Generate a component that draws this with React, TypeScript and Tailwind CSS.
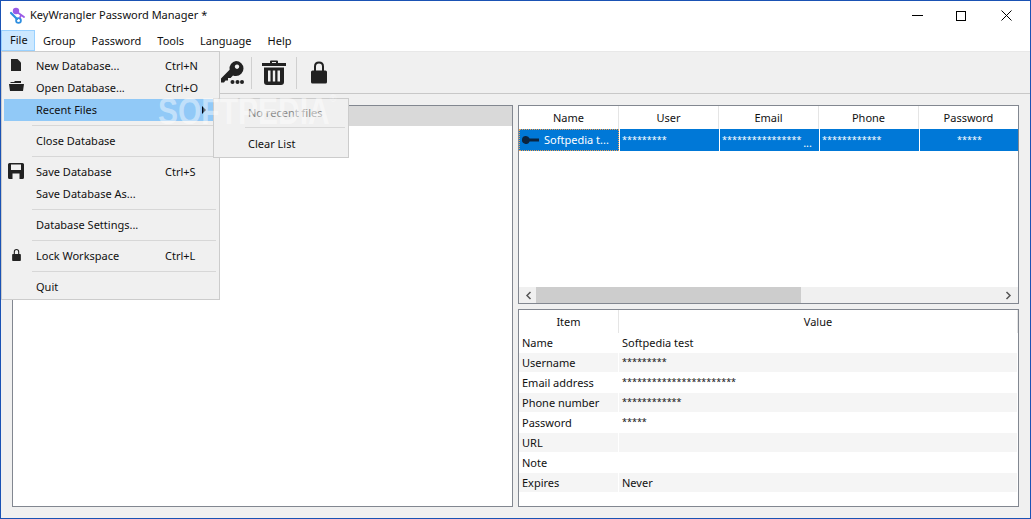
const font = { fontFamily: '"Noto Sans", sans-serif' };

const menuBar = ["Group", "Password", "Tools", "Language", "Help"];

const columns = ["Name", "User", "Email", "Phone", "Password"];

const details = [
  ["Name", "Softpedia test"],
  ["Username", "*********"],
  ["Email address", "***********************"],
  ["Phone number", "************"],
  ["Password", "*****"],
  ["URL", ""],
  ["Note", ""],
  ["Expires", "Never"],
];

function Logo() {
  return (
    <svg width="16" height="17" viewBox="0 0 16 17">
      <g fill="none" strokeLinecap="round">
        <path d="M2 6 L8 12" stroke="#2f8fe0" strokeWidth="2.2" />
        <circle cx="9.5" cy="13.5" r="2.4" stroke="#2f8fe0" strokeWidth="1.8" />
        <circle cx="7" cy="4" r="3.2" fill="#9a5be6" />
        <path d="M8 5 L15 10 M12 8 L11 10.5" stroke="#9a5be6" strokeWidth="1.8" />
      </g>
    </svg>
  );
}

function KeyDots() {
  return (
    <svg width="24" height="25" viewBox="0 0 24 25" fill="#222">
      <path d="M16 1 a7.5 7.5 0 0 1 0 15 a7.5 7.5 0 0 1 -3 -.6 l-2.4 2.6 h-2.6 v2.5 h-2.5 l-1.5 2 H1 v-4 l8.6 -8.8 A7.5 7.5 0 0 1 16 1 z M17 4.5 a2.2 2.2 0 1 0 .01 0 z" fillRule="evenodd" />
      <circle cx="12.5" cy="22" r="2" />
      <circle cx="17.5" cy="22" r="2" />
      <circle cx="22" cy="22" r="2" />
    </svg>
  );
}

function Trash() {
  return (
    <svg width="24" height="25" viewBox="0 0 24 25" fill="#222">
      <path d="M8 3 V1.5 Q8 0.5 9 0.5 H15 Q16 0.5 16 1.5 V3 H24 V6 H0 V3 z M10 3 H14 V2 H10 z" fillRule="evenodd" />
      <path d="M2 7.5 H22 V22 Q22 25 19 25 H5 Q2 25 2 22 z M6 10.5 V21.5 H8.5 V10.5 z M10.8 10.5 V21.5 H13.2 V10.5 z M15.5 10.5 V21.5 H18 V10.5 z" fillRule="evenodd" />
    </svg>
  );
}

function Lock({ w, h }: { w: number; h: number }) {
  return (
    <svg width={w} height={h} viewBox="0 0 16 22" fill="#222">
      <path d="M3 9 V5 Q3 0 8 0 Q13 0 13 5 V9 H14.5 Q16 9 16 10.5 V20.5 Q16 22 14.5 22 H1.5 Q0 22 0 20.5 V10.5 Q0 9 1.5 9 z M5 9 H11 V5 Q11 2 8 2 Q5 2 5 5 z" fillRule="evenodd" />
    </svg>
  );
}

function MenuRow({ label, shortcut, icon }: { label: string; shortcut?: string; icon?: React.ReactNode }) {
  return (
    <div className="flex h-[22px] items-center">
      <div className="mb-[2px] flex w-[32px] justify-center pr-[8px]">{icon}</div>
      <span className="w-[129px] whitespace-nowrap">{label}</span>
      <span>{shortcut}</span>
    </div>
  );
}

function Sep() {
  return <div className="my-[4px] ml-[28px] mr-[3px] h-px bg-[#d7d7d7]" />;
}

function FileMenu() {
  return (
    <div className="absolute left-0 top-[50px] z-10 h-[249px] w-[219px] border border-[#cccccc] bg-[#f0f0f0] pl-[2px] pt-[3px] text-[11px] text-[#111]">
      <MenuRow
        label="New Database..."
        shortcut="Ctrl+N"
        icon={
          <svg width="10" height="12" viewBox="0 0 10 12" fill="#222">
            <path d="M0 0 H6.5 L10 3.5 V12 H0 z" />
          </svg>
        }
      />
      <MenuRow
        label="Open Database..."
        shortcut="Ctrl+O"
        icon={
          <svg width="15" height="10" viewBox="0 0 15 10" fill="#222" className="mb-[2px]">
            <path d="M1 1 H5 L6 0 H12 V2 H2 z M0 3 H15 L14 10 H1 z" />
          </svg>
        }
      />
      <div className="relative mr-[4px] flex h-[22px] items-center bg-[#91c9f7]">
        <span className="pl-[32px]">Recent Files</span>
        <span className="absolute right-[9px] top-[7px] h-0 w-0 border-y-[4px] border-l-[4px] border-y-transparent border-l-black" />
      </div>
      <Sep />
      <MenuRow label="Close Database" />
      <Sep />
      <MenuRow
        label="Save Database"
        shortcut="Ctrl+S"
        icon={
          <svg width="16" height="16" viewBox="0 0 16 16" fill="#222">
            <path
              d="M1.5 0 H14.5 Q16 0 16 1.5 V14.5 Q16 16 14.5 16 H1.5 Q0 16 0 14.5 V1.5 Q0 0 1.5 0 z M3 1.5 V7 H13 V1.5 z M4.5 10.5 V16 H11.5 V10.5 z"
              fillRule="evenodd"
            />
          </svg>
        }
      />
      <MenuRow label="Save Database As..." />
      <Sep />
      <MenuRow label="Database Settings..." />
      <Sep />
      <MenuRow label="Lock Workspace" shortcut="Ctrl+L" icon={<Lock w={9} h={12} />} />
      <Sep />
      <MenuRow label="Quit" />
    </div>
  );
}

function RecentMenu() {
  return (
    <div className="absolute left-[212px] top-[97px] z-20 h-[60px] w-[136px] border border-[#cccccc] bg-[#f0f0f0] text-[11px] text-[#111]">
      <div className="flex h-[28px] items-center pl-[34px] text-[#888]">No recent files</div>
      <div className="ml-[31px] mr-[3px] h-px bg-[#d7d7d7]" />
      <div className="flex h-[29px] items-center pl-[34px] pt-[3px]">Clear List</div>
    </div>
  );
}

function Watermark() {
  return (
    <div
      className="pointer-events-none absolute left-[157px] top-[93px] z-30 flex scale-y-[1.2] text-[30px] font-bold leading-[36px] text-white/45"
      style={{ fontFamily: '"Liberation Sans", sans-serif' }}
    >
      SOFTPEDIA
      <span className="text-[9px] font-normal leading-[14px]">®</span>
    </div>
  );
}

function EntriesTable() {
  return (
    <div className="flex h-[199px] flex-col overflow-hidden border border-[#828790] bg-white">
      <div className="grid h-[23px] grid-cols-[100px_100px_100px_100px_100px]">
        {columns.map((c) => (
          <div key={c} className="flex items-center justify-center border-r border-[#e5e5e5] pt-px text-[11px] text-[#111]">
            {c}
          </div>
        ))}
      </div>
      <div className="grid h-[22px] grid-cols-[100px_100px_100px_100px_100px] text-[9px] text-white">
        <div className="flex items-center gap-[5px] border border-dotted border-[#f0a050] bg-[#0078d7] pl-[2px] text-[11px]">
          <svg width="17" height="8" viewBox="0 0 17 8" fill="#0b2440">
            <path d="M4 0 a4 4 0 0 1 3.6 2.5 H17 V5.5 H7.6 A4 4 0 1 1 4 0 z" />
          </svg>
          <span className="whitespace-nowrap">Softpedia t...</span>
        </div>
        <div className="ml-px bg-[#0078d7] pl-[2px] pt-[4px]">*********</div>
        <div className="relative ml-px bg-[#0078d7] pl-[2px] pt-[4px]">
          <span>****************</span>
          <span className="absolute bottom-[3px] right-[7px] text-[11px] leading-none">...</span>
        </div>
        <div className="ml-px bg-[#0078d7] pl-[2px] pt-[4px]">************</div>
        <div className="ml-px bg-[#0078d7] pt-[4px] text-center">*****</div>
      </div>
      <div className="flex-1" />
      <div className="flex h-[16px] items-center bg-[#f0f0f0]">
        <svg className="ml-[6px]" width="7" height="9" viewBox="0 0 7 9" fill="none" stroke="#555" strokeWidth="1.5">
          <path d="M5.5 1 L2 4.5 L5.5 8" />
        </svg>
        <div className="ml-[4px] h-full w-[265px] bg-[#cdcdcd]" />
        <div className="flex-1" />
        <svg className="mr-[6px]" width="7" height="9" viewBox="0 0 7 9" fill="none" stroke="#555" strokeWidth="1.5">
          <path d="M1.5 1 L5 4.5 L1.5 8" />
        </svg>
      </div>
    </div>
  );
}

function DetailsTable() {
  return (
    <div className="flex-1 border border-[#828790] bg-white text-[11px] text-[#111]">
      <div className="grid h-[23px] grid-cols-[100px_1fr]">
        <div className="flex items-center justify-center border-r border-[#e5e5e5] pt-[2px]">Item</div>
        <div className="flex items-center justify-center border-r border-[#e5e5e5] pt-[2px]">Value</div>
      </div>
      {details.map(([item, value], i) => (
        <div key={item} className="grid h-[20px] grid-cols-[100px_1fr] pr-px">
          <div className={`flex h-[19px] items-center border-r border-white pl-[3px] pt-[2px] ${i % 2 ? "bg-[#f5f5f5]" : ""}`}>
            {item}
          </div>
          <div className={`h-[19px] pl-[3px] ${i % 2 ? "bg-[#f5f5f5]" : ""} ${value.startsWith("*") ? "pt-[2px] text-[9px]" : "flex items-center pt-[2px]"}`}>
            {value}
          </div>
        </div>
      ))}
    </div>
  );
}

export default function App() {
  return (
    <div className="relative flex h-[519px] w-[1031px] flex-col overflow-hidden border border-[#1a52b4] bg-[#f0f0f0]" style={font}>
      <div className="flex h-[29px] items-center bg-white">
        <div className="ml-[8px] mr-[5px]">
          <Logo />
        </div>
        <span className="text-[11px] text-[#111]">KeyWrangler Password Manager *</span>
        <div className="flex-1" />
        <svg width="11" height="1" className="mr-[33px]">
          <rect width="11" height="1" fill="#000" />
        </svg>
        <svg width="10" height="10" className="mr-[35px]" fill="none" stroke="#000">
          <rect x="0.5" y="0.5" width="9" height="9" />
        </svg>
        <svg width="11" height="11" className="mr-[18px]" stroke="#000">
          <path d="M0.5 0.5 L10.5 10.5 M10.5 0.5 L0.5 10.5" />
        </svg>
      </div>

      <div className="flex h-[22px] items-stretch border-b border-[#e8e8e8] bg-white text-[11px] text-[#111]">
        <div className="flex w-[34px] items-center border border-[#99d1ff] bg-[#cce8ff] pl-[8px]">File</div>
        <div className="flex items-center pt-[1px]">
          {menuBar.map((m) => (
            <span key={m} className="px-[8px]">
              {m}
            </span>
          ))}
        </div>
      </div>

      <div className="flex h-[42px] items-center border-b border-[#c8c8c8] pl-[219px]">
        <KeyDots />
        <div className="ml-[7px] mr-[10px] h-[32px] w-px bg-[#d0d0d0]" />
        <Trash />
        <div className="ml-[10px] mr-[14px] h-[32px] w-px bg-[#d0d0d0]" />
        <Lock w={16} h={23} />
      </div>

      <div className="flex flex-1 gap-[5px] px-[11px] pb-[11px] pt-[11px]">
        <div className="w-[501px] border border-[#828790] bg-white">
          <div className="h-[20px] bg-[#d9d9d9]" />
        </div>
        <div className="flex min-w-0 flex-1 flex-col gap-[5px]">
          <EntriesTable />
          <DetailsTable />
        </div>
      </div>

      <FileMenu />
      <RecentMenu />
      <Watermark />
    </div>
  );
}
